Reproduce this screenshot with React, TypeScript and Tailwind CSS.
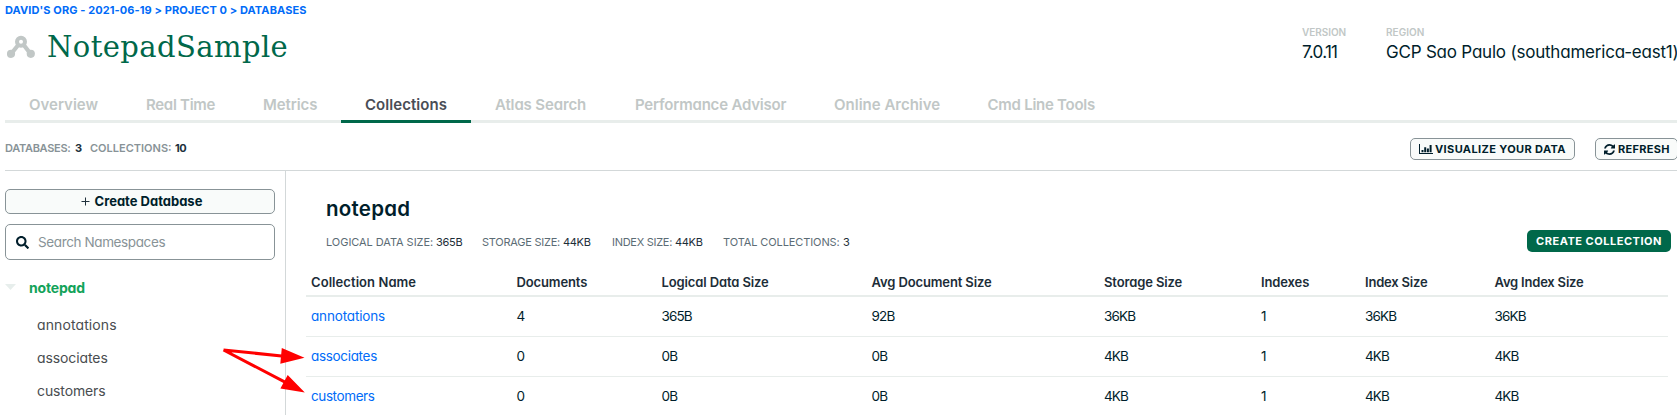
import React from "react";
import { FaSearch } from "react-icons/fa";

const tabs = [
  { label: "Overview", cls: "w-[117px]" },
  { label: "Real Time", cls: "w-[117px] tracking-[-0.3px]" },
  { label: "Metrics", cls: "w-[102px] tracking-[-0.1px]" },
  { label: "Collections", cls: "w-[130px] tracking-[0.06px]", active: true },
  { label: "Atlas Search", cls: "w-[140px] tracking-[-0.14px]" },
  { label: "Performance Advisor", cls: "w-[199px] tracking-[-0.2px]" },
  { label: "Online Archive", cls: "w-[153.5px]" },
  { label: "Cmd Line Tools", cls: "w-[160px] tracking-[-0.26px]" },
];

const stats = [
  { label: "LOGICAL DATA SIZE:", value: "365B", cls: "w-[156px]", labelCls: "w-[110px] tracking-[-0.05px]" },
  { label: "STORAGE SIZE:", value: "44KB", cls: "w-[130px]", labelCls: "w-[81px] tracking-[-0.24px]" },
  { label: "INDEX SIZE:", value: "44KB", cls: "w-[111px]", labelCls: "w-[63px] tracking-[-0.28px]" },
  { label: "TOTAL COLLECTIONS:", value: "3", cls: "w-[130px]", labelCls: "w-[120px] tracking-[-0.1px]" },
];

const columns = [
  { label: "Collection Name", cls: "tracking-[0.07px]" },
  { label: "Documents", cls: "tracking-[-0.12px]" },
  { label: "Logical Data Size", cls: "tracking-[-0.12px]" },
  { label: "Avg Document Size", cls: "tracking-[-0.12px]" },
  { label: "Storage Size", cls: "tracking-[-0.12px]" },
  { label: "Indexes", cls: "tracking-[-0.12px]" },
  { label: "Index Size", cls: "tracking-[-0.2px]" },
  { label: "Avg Index Size", cls: "tracking-[-0.2px]" },
];

const rows = [
  { name: "annotations", cls: "tracking-[-0.15px]", values: ["4", "365B", "92B", "36KB", "1", "36KB", "36KB"] },
  { name: "associates", cls: "tracking-[-0.32px]", values: ["0", "0B", "0B", "4KB", "1", "4KB", "4KB"] },
  { name: "customers", cls: "tracking-[-0.4px]", values: ["0", "0B", "0B", "4KB", "1", "4KB", "4KB"] },
];

const gridCols = "grid grid-cols-[205.5px_145px_210px_232.5px_157px_104px_129.5px_1fr] pl-[5px]";

function ClusterIcon() {
  return (
    <svg className="mr-[11px] ml-[2px] h-[24px] w-[29px] shrink-0" viewBox="7 35 29 24" fill="none">
      <path d="M19 44 L11 54 M23 44 L30.7 54" stroke="#c1c7c6" strokeWidth="4.2" />
      <circle cx="11" cy="53.8" r="4.1" fill="#c1c7c6" />
      <circle cx="30.8" cy="53.8" r="4.1" fill="#c1c7c6" />
      <circle cx="21" cy="41.7" r="4" stroke="#c1c7c6" strokeWidth="4" fill="#fff" />
    </svg>
  );
}

function BarChartIcon() {
  return (
    <svg className="h-[12px] w-[14px] shrink-0" viewBox="0 0 14 12" fill="#001e2b">
      <path d="M0 1h1v9h13v1H0zM2.500 7h2v2.200h-2zM5.200 4.200h2v5h-2zM7.900 5.400h2v3.800h-2zM10.600 2h2v7.200h-2z" />
    </svg>
  );
}

function RefreshIcon() {
  return (
    <svg className="h-[11px] w-[11px] shrink-0" viewBox="0 0 1536 1536" fill="#001e2b">
      <path d="M1511 928q0 5-1 7-64 268-268 434.500T764 1536q-146 0-282.500-55T238 1324l-129 129q-19 19-45 19t-45-19-19-45V960q0-26 19-45t45-19h448q26 0 45 19t19 45-19 45l-137 137q71 66 161 102t187 36q134 0 250-65t186-179q11-17 53-117 8-23 30-23h192q13 0 22.500 9.500t9.500 22.500zm25-800v448q0 26-19 45t-45 19h-448q-26 0-45-19t-19-45 19-45l138-138Q969 256 768 256q-134 0-250 65T332 500q-11 17-53 117-8 23-30 23H50q-13 0-22.500-9.500T18 608v-7q65-268 270-434.500T768 0q146 0 284 55.500T1297 212l130-129q19-19 45-19t45 19 19 45z" />
    </svg>
  );
}

function Sidebar() {
  return (
    <aside className="flex w-[281px] shrink-0 flex-col border-r border-[#d3d8d9] pt-[18px] pr-[10px]">
      <button className="flex h-[25px] items-center justify-center rounded-[5px] border border-[#889397] bg-[#f9fbfa] text-[13px] font-bold text-[#001e2b]">
        <svg className="mr-[5px] ml-[3px] h-[9px] w-[9px]" viewBox="0 0 9 9">
          <path d="M4.500 0.500v8M0.500 4.500h8" stroke="#21313c" strokeWidth="1" />
        </svg>
        Create Database
      </button>
      <div className="mt-[10px] flex h-[36px] items-center rounded-[5px] border border-[#889397] pl-[10px]">
        <FaSearch className="mr-[9px] h-[13px] w-[13px] text-[#001e2b]" />
        <span className="text-[13.5px] tracking-[-0.38px] text-[#889397]">Search Namespaces</span>
      </div>
      <div className="mt-[10px] flex h-[34px] items-center text-[14px] font-bold tracking-[-0.18px] text-[#13a35a]">
        <svg className="mr-[13px] h-[6px] w-[11px]" viewBox="0 0 11 6">
          <path d="M0 0h11L5.500 6z" fill="#e7eeec" />
        </svg>
        notepad
      </div>
      <ul className="mt-[4px] pl-[32px] text-[14px] leading-[33px] text-[#494d50]">
        <li className="tracking-[0.1px]">annotations</li>
        <li className="tracking-[-0.1px]">associates</li>
        <li className="tracking-[-0.12px]">customers</li>
      </ul>
    </aside>
  );
}

function Arrows() {
  return (
    <svg className="pointer-events-none absolute top-[340px] left-[220px] h-[60px] w-[90px]" viewBox="220 340 90 60">
      <path d="M223.500 350 L284 356.200 M223.500 350 L286 382.600" stroke="#f00" strokeWidth="3" />
      <path d="M281.800 348 L304.500 357.700 L280.300 363.800z M287.700 375 L304.800 392.500 L280.400 388.500z" fill="#f00" />
    </svg>
  );
}

export default function App() {
  return (
    <div className="relative flex h-[415px] w-full flex-col overflow-hidden bg-white pl-[5px] font-['Inter',sans-serif] whitespace-nowrap text-[#001e2b] [font-feature-settings:'cv11']">
      <nav className="h-[20px] text-[11px] leading-[20px] font-bold tracking-[0.09px] text-[#016bf8]">
        DAVID'S ORG - 2021-06-19 &gt; PROJECT 0 &gt; DATABASES
      </nav>

      <header className="flex h-[69px] justify-between">
        <div className="flex h-[54px] items-center">
          <ClusterIcon />
          <h1 className="font-['DejaVu_Serif',serif] text-[29px] leading-[54px] tracking-[0.42px] text-[#00684a]">NotepadSample</h1>
        </div>
        <div className="flex pt-[4px]">
          <div className="w-[84px]">
            <div className="text-[10px] leading-[16px] font-semibold tracking-[-0.05px] text-[#c1c7c6]">VERSION</div>
            <div className="text-[17px] leading-[24px] tracking-[-0.7px]">7.0.11</div>
          </div>
          <div className="w-[291px]">
            <div className="text-[10px] leading-[16px] font-semibold tracking-[0.05px] text-[#c1c7c6]">REGION</div>
            <div className="text-[17px] leading-[24px] tracking-[-0.21px]">GCP Sao Paulo (southamerica-east1)</div>
          </div>
        </div>
      </header>

      <div className="flex h-[34px] text-[15px] leading-[31px] font-semibold">
        {tabs.map((t) => (
          <div
            key={t.label}
            className={`shrink-0 border-b-3 pl-[24px] ${t.cls} ${t.active ? "border-[#00684a] text-[#494d55]" : "border-[#e8edeb] text-[#c1c7c6]"}`}
          >
            {t.label}
          </div>
        ))}
        <div className="flex-1 border-b-3 border-[#e8edeb]" />
      </div>

      <div className="flex h-[48px] items-center justify-between border-b border-[#d3d8d9] text-[11px]">
        <div className="flex pt-[3px] font-semibold text-[#889397]">
          <span className="w-[70px] tracking-[-0.3px]">DATABASES:</span>
          <span className="w-[15px] font-bold text-[#21313c]">3</span>
          <span className="w-[85px]">COLLECTIONS:</span>
          <span className="font-bold tracking-[-0.6px] text-[#21313c]">10</span>
        </div>
        <div className="-mr-px flex gap-[20px] pt-[5px] font-bold">
          <button className="flex h-[22px] w-[165px] items-center gap-[2px] rounded-[5px] border border-[#889397] bg-[#f9fbfa] pl-[8px] tracking-[0.38px]">
            <BarChartIcon />
            VISUALIZE YOUR DATA
          </button>
          <button className="flex h-[22px] w-[83px] items-center gap-[3px] rounded-[5px] border border-[#889397] bg-[#f9fbfa] pl-[8px] tracking-[0.3px]">
            <RefreshIcon />
            REFRESH
          </button>
        </div>
      </div>

      <div className="flex min-h-0 flex-1">
        <Sidebar />
        <main className="flex-1 pt-[23px]">
          <h2 className="pl-[40px] text-[20.5px] leading-[29px] font-semibold tracking-[0.25px]">notepad</h2>
          <div className="mt-[7px] flex h-[22px] items-center justify-between pr-[6px] pl-[40px] text-[11px]">
            <div className="flex pt-[2px] text-[#5c6c75]">
              {stats.map((s) => (
                <div key={s.label} className={`flex ${s.cls}`}>
                  <span className={s.labelCls}>{s.label}</span>
                  <span className="tracking-[-0.3px] text-[#1c2d38]">{s.value}</span>
                </div>
              ))}
            </div>
            <button className="h-[22px] w-[144px] rounded-[5px] bg-[#00684a] font-bold tracking-[0.52px] text-white">
              CREATE COLLECTION
            </button>
          </div>

          <div className="mt-[18px] mr-[9px] ml-[20px]">
            <div className={`${gridCols} border-b-2 border-[#e8edeb] text-[13px] leading-[25px] font-semibold text-[#1c2d38]`}>
              {columns.map((c) => (
                <div key={c.label} className={c.cls}>{c.label}</div>
              ))}
            </div>
            {rows.map((r) => (
              <div key={r.name} className={`${gridCols} h-[40px] border-b border-[#e8edeb] text-[13.5px] leading-[39px]`}>
                <div className={`text-[#016bf8] ${r.cls}`}>{r.name}</div>
                {r.values.map((v, i) => (
                  <div key={i} className="tracking-[-0.85px]">{v}</div>
                ))}
              </div>
            ))}
          </div>
        </main>
      </div>
      <Arrows />
    </div>
  );
}
